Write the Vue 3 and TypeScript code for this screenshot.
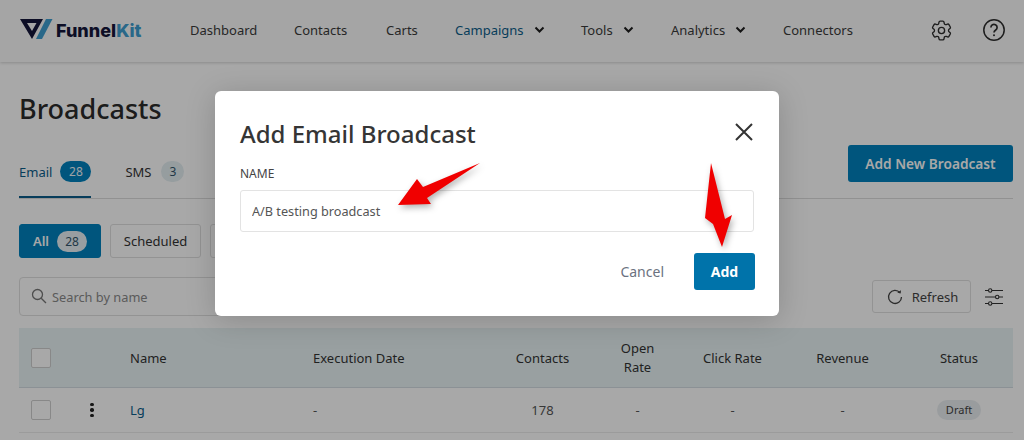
<script setup lang="ts">
const navItems = [
  { label: 'Dashboard', width: 104 },
  { label: 'Contacts', width: 92 },
  { label: 'Carts', width: 69 },
  { label: 'Campaigns', width: 126, caret: true, active: true },
  { label: 'Tools', width: 90, caret: true },
  { label: 'Analytics', width: 112, caret: true },
  { label: 'Connectors', width: 90 },
]

const columns = [
  { label: 'Name', cls: 'left' },
  { label: 'Execution Date', cls: 'left' },
  { label: 'Contacts', cls: '' },
  { label: 'Open Rate', cls: 'narrow' },
  { label: 'Click Rate', cls: '' },
  { label: 'Revenue', cls: '' },
  { label: 'Status', cls: '' },
]
</script>

<template>
  <div class="page">
    <header class="topbar">
      <div class="logo">
        <svg width="33" height="22" viewBox="0 0 33 22">
          <path d="M0 1h23l-11 20z M7 5l5 8 4.500-8z" fill="#14163a" fill-rule="evenodd" />
          <path d="M26 1h6.500L22 21h-6z" fill="#3f9fd0" />
        </svg>
        <span class="logo__text">Funnel<em>Kit</em></span>
      </div>
      <nav class="nav">
        <a
          v-for="item in navItems"
          :key="item.label"
          class="nav__link"
          :class="{ 'nav__link--active': item.active }"
          :style="{ width: item.width + 'px' }"
        >
          {{ item.label }}
          <svg v-if="item.caret" width="11" height="8" viewBox="0 0 11 8">
            <path d="M1.500 1.500l4 4 4-4" fill="none" stroke="#1e1e1e" stroke-width="2" />
          </svg>
        </a>
      </nav>
      <div class="topbar__icons">
        <svg width="25" height="25" viewBox="0 0 24 24" fill="none" stroke="#2d2d2d" stroke-width="1.300">
          <path d="M9.594 3.940c.09-.542.56-.94 1.110-.94h2.593c.55 0 1.020.398 1.110.94l.213 1.281c.063.374.313.686.645.870.074.040.147.083.22.127.324.196.72.257 1.075.124l1.217-.456a1.125 1.125 0 011.370.49l1.296 2.247a1.125 1.125 0 01-.26 1.431l-1.003.827c-.293.24-.438.613-.431.992a6.759 6.759 0 010 .255c-.007.378.138.75.43.99l1.005.828c.424.35.534.954.26 1.430l-1.298 2.247a1.125 1.125 0 01-1.369.491l-1.217-.456c-.355-.133-.75-.072-1.076.124a6.570 6.570 0 01-.22.128c-.331.183-.581.495-.644.869l-.213 1.280c-.09.543-.56.941-1.110.941h-2.594c-.55 0-1.020-.398-1.110-.94l-.213-1.281c-.062-.374-.312-.686-.644-.87a6.520 6.520 0 01-.22-.127c-.325-.196-.72-.257-1.076-.124l-1.217.456a1.125 1.125 0 01-1.369-.49l-1.297-2.247a1.125 1.125 0 01.26-1.431l1.004-.827c.292-.24.437-.613.43-.992a6.932 6.932 0 010-.255c.007-.378-.138-.75-.43-.99l-1.004-.828a1.125 1.125 0 01-.26-1.430l1.297-2.247a1.125 1.125 0 011.370-.491l1.216.456c.356.133.751.072 1.076-.124.072-.044.146-.087.22-.128.332-.183.582-.495.644-.869l.214-1.281z" />
          <circle cx="12" cy="12" r="3" />
        </svg>
        <svg width="24" height="24" viewBox="0 0 24 24" fill="none" stroke="#2d2d2d" stroke-width="1.500">
          <circle cx="12" cy="12" r="10.200" />
          <path d="M8.900 9.400a3.100 3.100 0 1 1 4.800 2.600c-1.100.7-1.700 1.300-1.700 2.600" stroke-width="1.700" />
          <circle cx="12" cy="17.300" r="1" fill="#2d2d2d" stroke="none" />
        </svg>
      </div>
    </header>

    <main class="content">
      <h1 class="title">Broadcasts</h1>

      <div class="tabs">
        <div class="tab tab--active">Email <span class="count count--dark">28</span></div>
        <div class="tab">SMS <span class="count">3</span></div>
        <button class="primary">Add New Broadcast</button>
      </div>

      <div class="filters">
        <button class="filter filter--active">All <span class="filter__count">28</span></button>
        <button class="filter">Scheduled</button>
        <button class="filter">Sent</button>
      </div>

      <div class="tools">
        <div class="search">
          <svg width="16" height="16" viewBox="0 0 16 16" fill="none" stroke="#777" stroke-width="1.300">
            <circle cx="6.500" cy="6.500" r="5" />
            <path d="M10.200 10.200l4.800 4.800" />
          </svg>
          <span>Search by name</span>
        </div>
        <button class="refresh">
          <svg width="16" height="16" viewBox="0 0 16 16" fill="none" stroke="#444" stroke-width="1.300">
            <path d="M13 3.800A6.500 6.500 0 1 0 14.500 8" />
            <path d="M10.200 3.600l3.400.9.400-3.200z" fill="#444" stroke="none" />
          </svg>
          Refresh
        </button>
        <svg class="sliders" width="18" height="18" viewBox="0 0 18 18" fill="none" stroke="#333" stroke-width="1.100">
          <path d="M0 2.500h3.500M7 2.500h11M0 9h10.500M14 9h4M0 15.500h3.500M7 15.500h11" />
          <circle cx="5.200" cy="2.500" r="1.700" />
          <circle cx="12.200" cy="9" r="1.700" />
          <circle cx="5.200" cy="15.500" r="1.700" />
        </svg>
      </div>

      <div class="table">
        <div class="row row--head">
          <span class="cell-check"><i class="check" /></span>
          <span />
          <span v-for="col in columns" :key="col.label" :class="col.cls">{{ col.label }}</span>
        </div>
        <div class="row">
          <span class="cell-check"><i class="check" /></span>
          <span class="dots"><i /><i /><i /></span>
          <span class="left link">Lg</span>
          <span class="left">-</span>
          <span>178</span>
          <span>-</span>
          <span>-</span>
          <span>-</span>
          <span><b class="draft">Draft</b></span>
        </div>
      </div>
    </main>

    <div class="backdrop" />

    <section class="modal">
      <header class="modal__head">
        <h2>Add Email Broadcast</h2>
        <svg width="20" height="20" viewBox="0 0 20 20" fill="none" stroke="#333" stroke-width="2">
          <path d="M2 2l16 16M18 2L2 18" />
        </svg>
      </header>
      <label class="field">
        <span>NAME</span>
        <input type="text" value="A/B testing broadcast" />
      </label>
      <footer class="modal__foot">
        <button class="cancel">Cancel</button>
        <button class="add">Add</button>
      </footer>
    </section>

    <svg class="arrows" width="1024" height="440" viewBox="0 0 1024 440">
      <path d="M480 163L423 187 417 179 398 205 431 204 427 198z" fill="#f00000" />
      <path d="M711 163L705 218 713 224 722 247 732 215 725 219z" fill="#f00000" />
    </svg>
  </div>
</template>

<style scoped>
.page {
  position: relative;
  width: 1024px;
  height: 440px;
  overflow: hidden;
  background: #fff;
  color: #333;
  font-family: "Noto Sans", sans-serif;
  font-size: 13px;
}

.topbar {
  display: flex;
  align-items: center;
  height: 62px;
  padding: 0 18px 2px 20px;
  box-sizing: border-box;
  box-shadow: 0 1px 3px rgba(0, 0, 0, 0.18);
  background: #fbfbfb;
}

.logo {
  display: flex;
  align-items: center;
  width: 170px;
  flex: none;
}

.logo svg {
  margin-bottom: 3px;
}

.logo__text {
  margin-left: 3px;
  font-family: Inter, sans-serif;
  font-size: 18px;
  font-weight: 800;
  color: #14163a;
}

.logo__text em {
  font-style: normal;
  color: #3f9fd0;
}

.nav {
  display: flex;
  flex: 1;
}

.nav__link {
  display: flex;
  align-items: center;
  gap: 10px;
  box-sizing: border-box;
  white-space: nowrap;
  color: #3a3a3a;
}

.nav__link--active {
  color: #0b5d8a;
}

.topbar__icons {
  display: flex;
  align-items: center;
  gap: 28px;
}

.content {
  padding: 0 11px 0 19px;
}

.title {
  margin: 28px 0 0;
  font-size: 27px;
  line-height: 37px;
  font-weight: 500;
  color: #2b2b2b;
}

.tabs {
  display: flex;
  align-items: center;
  height: 53px;
  margin-top: 18px;
  border-bottom: 1px solid #dcdcdc;
}

.tab {
  display: flex;
  align-items: center;
  gap: 8px;
  height: 53px;
  margin-right: 34px;
  box-sizing: border-box;
  color: #333;
}

.tab--active {
  color: #0b5d8a;
  box-shadow: inset 0 -2px 0 #0b5d8a;
}

.count {
  display: inline-block;
  width: 23px;
  height: 21px;
  margin-left: 2px;
  border-radius: 11px;
  background: #e4eef2;
  text-align: center;
  font-size: 12px;
  line-height: 21px;
  color: #33556b;
}

.count--dark {
  width: 31px;
  margin-left: 0;
  background: #0082be;
  color: #f0f6fa;
}

.primary {
  width: 165px;
  height: 37px;
  margin-left: auto;
  margin-bottom: 16px;
  border: 0;
  border-radius: 3px;
  background: #0082be;
  color: #fff;
  font: 600 13.700px "Noto Sans", sans-serif;
}

.filters {
  display: flex;
  gap: 9px;
  margin-top: 25px;
}

.filter {
  display: flex;
  align-items: center;
  justify-content: center;
  gap: 8px;
  width: 91px;
  height: 34px;
  border: 1px solid #dfdfdf;
  border-radius: 3px;
  background: #fff;
  color: #333;
  font: 13px "Noto Sans", sans-serif;
}

.filter--active {
  width: 82px;
  border-color: #0082be;
  background: #0082be;
  color: #fff;
  font-weight: 600;
}

.filter__count {
  display: inline-block;
  width: 30px;
  height: 21px;
  border-radius: 11px;
  background: #e8f0f5;
  color: #33556b;
  font-size: 12px;
  font-weight: 400;
  line-height: 21px;
}

.tools {
  display: flex;
  align-items: center;
  height: 39px;
  margin-top: 19px;
}

.search {
  display: flex;
  align-items: center;
  gap: 5px;
  width: 400px;
  height: 39px;
  padding-left: 11px;
  box-sizing: border-box;
  border: 1px solid #dfdfdf;
  border-radius: 4px;
  color: #8a8a8a;
  font-size: 12.800px;
}

.search svg {
  margin-bottom: 2px;
}

.refresh {
  display: flex;
  align-items: center;
  justify-content: center;
  gap: 9px;
  width: 99px;
  height: 33px;
  margin-left: auto;
  padding-left: 8px;
  border: 1px solid #dfdfdf;
  border-radius: 3px;
  background: #fff;
  color: #444;
  font: 13px "Noto Sans", sans-serif;
}

.sliders {
  margin: 0 10px 0 14px;
}

.table {
  margin-top: 12px;
}

.row {
  display: grid;
  grid-template-columns: 61px 50px 183px 182px 95px 95px 95px 125px 108px;
  align-items: center;
  height: 45px;
  box-sizing: border-box;
  border-bottom: 1px solid #ececec;
  text-align: center;
  color: #555;
}

.row--head {
  height: 60px;
  background: #e9f3f5;
  color: #333;
  border-bottom-color: #d3dde2;
}

.left {
  text-align: left;
}

.narrow {
  padding: 0 28px;
  line-height: 19px;
}

.link {
  color: #0b5d8a;
}

.cell-check {
  padding-left: 12px;
  text-align: left;
}

.check {
  display: block;
  width: 18px;
  height: 18px;
  border: 1px solid #cfcfcf;
  border-radius: 2px;
  background: #fff;
}

.dots {
  display: flex;
  flex-direction: column;
  align-items: flex-start;
  gap: 2px;
  padding-left: 10px;
}

.dots i {
  width: 3.500px;
  height: 3.500px;
  border-radius: 50%;
  background: #222;
}

.draft {
  display: inline-block;
  padding: 0 9px;
  border-radius: 10px;
  background: #e9edf0;
  font-size: 11px;
  font-weight: 400;
  line-height: 20px;
  color: #444;
}

.backdrop {
  position: absolute;
  inset: 0;
  background: rgba(0, 0, 0, 0.34);
}

.modal {
  position: absolute;
  left: 215px;
  top: 91px;
  width: 564px;
  height: 225px;
  padding: 0 25px;
  box-sizing: border-box;
  border-radius: 6px;
  background: #fff;
  box-shadow: 0 4px 30px rgba(0, 0, 0, 0.18);
}

.modal__head {
  display: flex;
  align-items: center;
  justify-content: space-between;
  height: 62px;
  padding-top: 23px;
  box-sizing: border-box;
}

.modal__head h2 {
  margin: 0;
  font-size: 24px;
  font-weight: 500;
  color: #353535;
}

.modal__head svg {
  margin-bottom: 3px;
}

.field {
  display: block;
  margin-top: 13px;
}

.field span {
  display: block;
  margin-bottom: 8px;
  font-size: 12px;
  line-height: 16px;
  color: #444;
}

.field input {
  display: block;
  width: 100%;
  height: 42px;
  padding: 0 11px;
  box-sizing: border-box;
  border: 1px solid #e3e3e3;
  border-radius: 3px;
  color: #555;
  font: 12.700px "Noto Sans", sans-serif;
}

.modal__foot {
  display: flex;
  align-items: center;
  justify-content: flex-end;
  gap: 30px;
  margin: 21px -1px 0 0;
}

.cancel {
  border: 0;
  padding: 0;
  background: none;
  color: #6b7280;
  font: 14px "Noto Sans", sans-serif;
}

.add {
  width: 61px;
  height: 37px;
  border: 0;
  border-radius: 3px;
  background: #0073aa;
  color: #fff;
  font: 700 14px "Noto Sans", sans-serif;
}

.arrows {
  position: absolute;
  left: 0;
  top: 0;
  filter: drop-shadow(2px 3px 3px rgba(0, 0, 0, 0.3));
}
</style>
